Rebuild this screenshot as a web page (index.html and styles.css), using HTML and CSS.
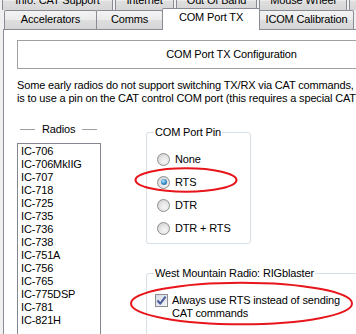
FILE: index.html
```html
<!DOCTYPE html>
<html>
<head>
<meta charset="utf-8">
<link rel="stylesheet" href="styles.css">
</head>
<body>
<div class="tabrow top">
  <div class="tab w-info">Info: CAT Support</div>
  <div class="tab w-internet">Internet</div>
  <div class="tab w-oob">Out Of Band</div>
  <div class="tab w-mouse">Mouse Wheel</div>
  <div class="tab w-more"></div>
</div>
<div class="tabrow bottom">
  <div class="tab w-acc">Accelerators</div>
  <div class="tab w-comms">Comms</div>
  <div class="tab sel w-com">COM Port TX</div>
  <div class="tab w-icom">ICOM Calibration</div>
</div>
<div class="panel">
  <div class="headbox">COM Port TX Configuration</div>
  <p class="desc">Some early radios do not support switching TX/RX via CAT commands, so the alternative<br>is to use a pin on the CAT control COM port (this requires a special CAT cable).</p>
  <div class="cols">
    <div class="leftcol">
      <div class="sectlabel"><span class="rule"></span><span>Radios</span><span class="rule"></span></div>
      <div class="listbox">
        <div>IC-706</div>
        <div>IC-706MkIIG</div>
        <div>IC-707</div>
        <div>IC-718</div>
        <div>IC-725</div>
        <div>IC-735</div>
        <div>IC-736</div>
        <div>IC-738</div>
        <div>IC-751A</div>
        <div>IC-756</div>
        <div>IC-765</div>
        <div>IC-775DSP</div>
        <div>IC-781</div>
        <div>IC-821H</div>
      </div>
    </div>
    <div class="rightcol">
      <fieldset class="group pin">
        <legend>COM Port Pin</legend>
        <div class="opt"><span class="radio"></span>None</div>
        <div class="opt"><span class="radio on"></span>RTS</div>
        <div class="opt"><span class="radio"></span>DTR</div>
        <div class="opt"><span class="radio"></span>DTR + RTS</div>
      </fieldset>
      <fieldset class="group wmr">
        <legend>West Mountain Radio: RIGblaster</legend>
        <div class="chkrow">
          <span class="check"><svg width="11" height="11" viewBox="0 0 11 11"><path d="M1.5 5.5 L4.2 8.6 L9.6 1.6" fill="none" stroke="#4d5f9c" stroke-width="2.2" stroke-linejoin="round"/></svg></span>
          <span class="chktext">Always use RTS instead of sending<br>CAT commands</span>
        </div>
      </fieldset>
    </div>
  </div>
</div>
<svg class="marks" width="356" height="334" viewBox="0 0 356 334">
  <ellipse cx="186" cy="180" rx="50.5" ry="11.8" fill="none" stroke="#e8151b" stroke-width="2"/>
  <ellipse cx="241.5" cy="303.5" rx="110.5" ry="20.8" fill="none" stroke="#e8151b" stroke-width="2"/>
</svg>
</body>
</html>
```
FILE: styles.css
```css
* { box-sizing: border-box; }
html, body { margin: 0; padding: 0; }
body {
  width: 356px;
  height: 334px;
  overflow: hidden;
  position: relative;
  background: #f0f0f0;
  font: 11px/13px "Liberation Sans", Arial, sans-serif;
  letter-spacing: -0.15px;
  color: #000;
}
.tabrow { display: flex; height: 19px; }
.tabrow.top { margin-top: -9px; padding-left: 2px; gap: 2px; }
.tabrow.bottom { padding-left: 4px; }
.tabrow.bottom .tab + .tab { margin-left: -1px; }
.tab {
  flex: none;
  height: 19px;
  border: 1px solid #898c95;
  border-bottom: none;
  border-radius: 2px 2px 0 0;
  background: linear-gradient(#f3f3f3, #ebebeb 48%, #dedede 52%, #d6d6d6);
  text-align: center;
  padding-top: 2px;
  white-space: nowrap;
}
.tab.sel {
  position: relative;
  z-index: 2;
  height: 22px;
  margin-top: -2px;
  background: #fff;
  padding-top: 2px;
}
.w-info { width: 111px; }
.w-internet { width: 59px; }
.w-oob { width: 81px; }
.w-mouse { width: 88px; }
.w-more { width: 40px; }
.w-acc { width: 93px; }
.w-comms { width: 67px; }
.w-com { width: 98px; }
.w-icom { width: 95px; }

.panel {
  margin-left: 3px;
  height: 305px;
  background: #fff;
  border-top: 1px solid #898c95;
  border-left: 1px solid #898c95;
  padding-left: 13px;
  padding-top: 10px;
}
.headbox {
  width: 429px;
  height: 29px;
  border: 1px solid #a0a0a0;
  text-align: center;
  line-height: 27px;
  white-space: nowrap;
}
.desc {
  margin: 10px 0 0 0;
  white-space: nowrap;
}
.cols { display: flex; margin-top: 18px; }
.leftcol { width: 84px; flex: none; }
.sectlabel {
  display: flex;
  align-items: center;
  height: 13px;
  padding-left: 3px;
  gap: 7px;
}
.sectlabel .rule { width: 15px; height: 1px; background: #a0a0a0; }
.listbox {
  margin-top: 7px;
  height: 192px;
  border: 1px solid #828790;
  padding: 1px 0 0 3px;
}
.rightcol { margin-left: 45px; flex: none; }
.group {
  margin: 0;
  border: 1px solid #d5dfe5;
  border-radius: 3px;
  padding: 0 0 0 7px;
  min-width: 0;
}
.group legend { padding: 0 1px; line-height: 13px; }
.pin { width: 105px; padding-top: 9px; padding-bottom: 3px; margin-top: 2.5px; }
.opt { display: flex; align-items: center; height: 23px; padding-left: 3px; gap: 5px; }
.radio {
  position: relative;
  width: 13px;
  height: 13px;
  border-radius: 50%;
  border: 1px solid #8c8e8f;
  background: radial-gradient(circle at 60% 65%, #f6f6f6 0, #e6e6e6 45%, #c9c9c9 100%);
  flex: none;
}
.radio.on::after {
  content: "";
  position: absolute;
  left: 2.5px;
  top: 2.5px;
  width: 6px;
  height: 6px;
  border-radius: 50%;
  background: radial-gradient(circle at 40% 35%, #bfe9ff 0, #3d97cf 45%, #164b74 100%);
}
.wmr { width: 260px; height: 80px; margin-top: 23.5px; padding-top: 14px; }
.chkrow { display: flex; align-items: flex-start; }
.check {
  width: 13px;
  height: 13px;
  margin: 0 4px 0 1px;
  border: 1px solid #8c8e8f;
  background: linear-gradient(135deg, #d6d9e6, #f4f5f8);
  display: flex;
  align-items: center;
  justify-content: center;
  flex: none;
}
.check svg { display: block; }
.chktext { white-space: nowrap; }
.marks { position: absolute; left: 0; top: 0; pointer-events: none; }
```
